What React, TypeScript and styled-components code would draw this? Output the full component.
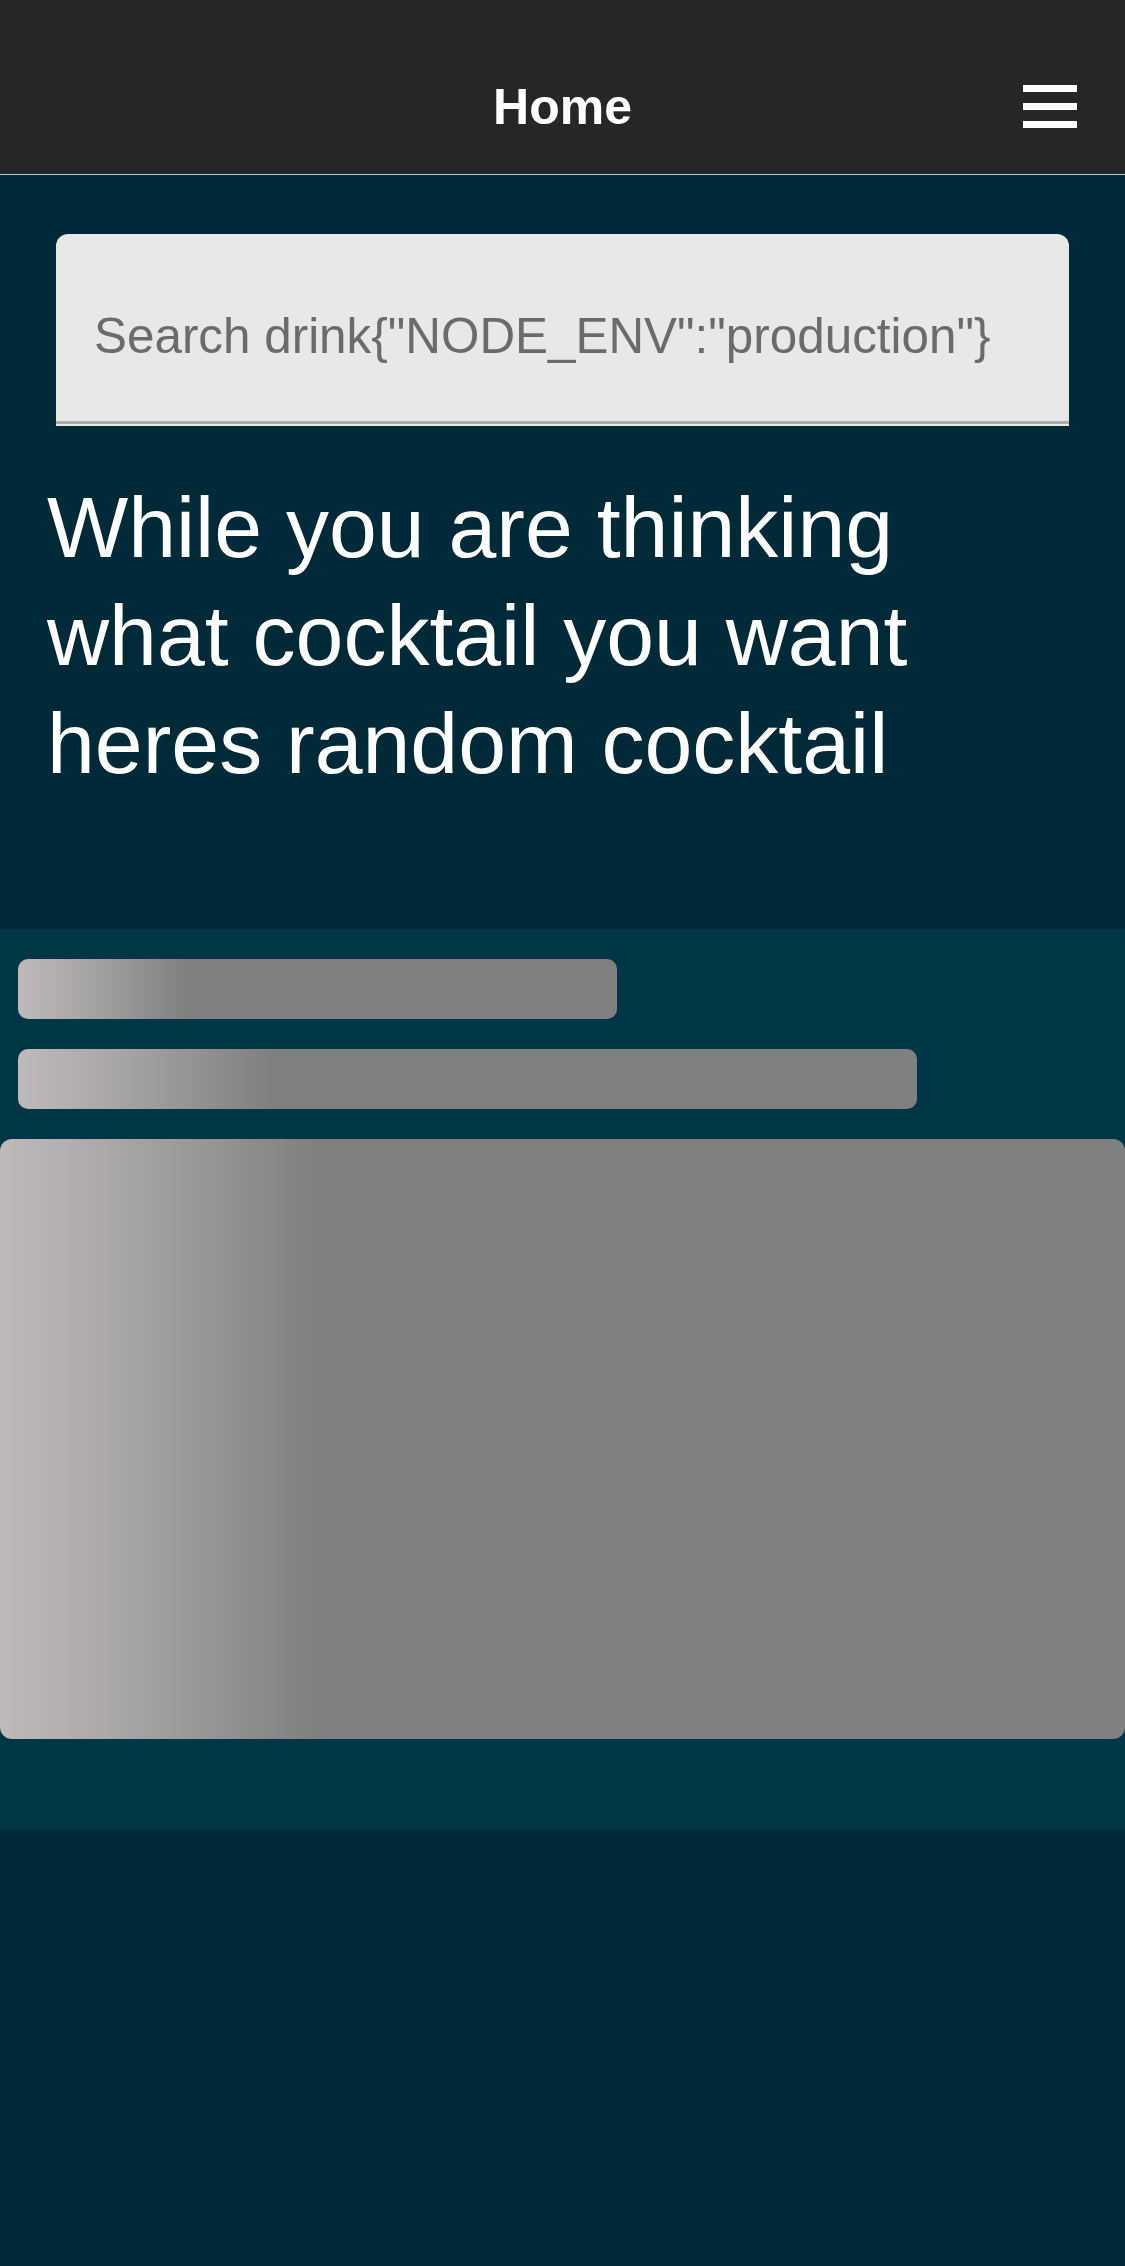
import React from "react";
import styled, { createGlobalStyle } from "styled-components";

const GlobalStyle = createGlobalStyle`
  html, body {
    margin: 0;
    padding: 0;
    background: #002a38;
  }
  body {
    font-family: "Liberation Sans", Arial, Helvetica, sans-serif;
    min-height: 100vh;
  }
  * {
    box-sizing: border-box;
  }
`;

export default function App() {
    return (
        <>
            <GlobalStyle />
            <Page>
                <Header>
                    <span />
                    <HeaderTitle>Home</HeaderTitle>
                    <MenuButton aria-label="menu">
                        <MenuBar />
                        <MenuBar />
                        <MenuBar />
                    </MenuButton>
                </Header>

                {/* 검색 + 안내문 */}
                <Main>
                    <SearchField>
                        <SearchInput placeholder={'Search drink{"NODE_ENV":"production"}'} />
                    </SearchField>
                    <Heading>While you are thinking what cocktail you want heres random cocktail</Heading>
                </Main>

                {/* 랜덤 칵테일 로딩 스켈레톤 */}
                <RandomSection>
                    <SkeletonLine width={599} />
                    <SkeletonLine width={899} />
                    <SkeletonImage />
                </RandomSection>
            </Page>
        </>
    );
}

/* ================== styled-components ================== */

const Page = styled.div`
    min-height: 100vh;
    background: #002a38;
`;

const Header = styled.header`
    height: 175px;
    padding-top: 40px;
    background: #252628;
    border-bottom: 1px solid #c2c2c2;
    display: grid;
    grid-template-columns: 1fr auto 1fr;
    align-items: center;
`;

const HeaderTitle = styled.h1`
    margin: 0;
    font-size: 50px;
    font-weight: 700;
    color: #fff;
`;

const MenuButton = styled.button`
    justify-self: end;
    margin-right: 48px;
    margin-top: -2px;
    padding: 0;
    border: none;
    background: transparent;
    display: flex;
    flex-direction: column;
    gap: 11px;
    cursor: pointer;
`;

const MenuBar = styled.span`
    display: block;
    width: 54px;
    height: 7px;
    background: #fff;
`;

const Main = styled.main`
    padding: 59px 0 132px;
    display: flex;
    flex-direction: column;
`;

const SearchField = styled.div`
    margin: 0 56px;
    height: 192px;
    padding-bottom: 2px;
    background: #e8e8e8;
    border-radius: 12px 12px 0 0;
    display: flex;
`;

const SearchInput = styled.input`
    flex: 1;
    min-width: 0;
    border: none;
    border-bottom: 3px solid #adadad;
    background: transparent;
    padding: 16px 38px 0;
    font-family: "Liberation Sans", Arial, Helvetica, sans-serif;
    font-size: 49.4px;
    color: #333;
    outline: none;

    &::placeholder {
        color: #6b6b6b;
        opacity: 1;
    }
`;

const Heading = styled.h2`
    margin: 47px 0 0;
    padding: 0 46px 0 47px;
    font-size: 86px;
    line-height: 108px;
    font-weight: 400;
    color: #fff;
`;

const RandomSection = styled.section`
    background: #003746;
    padding: 30px 0 90px;
    display: flex;
    flex-direction: column;
    gap: 30px;
`;

const shimmer = `linear-gradient(90deg, #bebab9 0%, #a6a4a3 12%, #808080 28%, #808080 100%)`;

const SkeletonLine = styled.div<{ width: number }>`
    width: ${({ width }) => width}px;
    height: 60px;
    margin-left: 18px;
    border-radius: 10px;
    background: ${shimmer};
`;

const SkeletonImage = styled.div`
    width: 100%;
    height: 600px;
    border-radius: 12px;
    background: ${shimmer};
`;
